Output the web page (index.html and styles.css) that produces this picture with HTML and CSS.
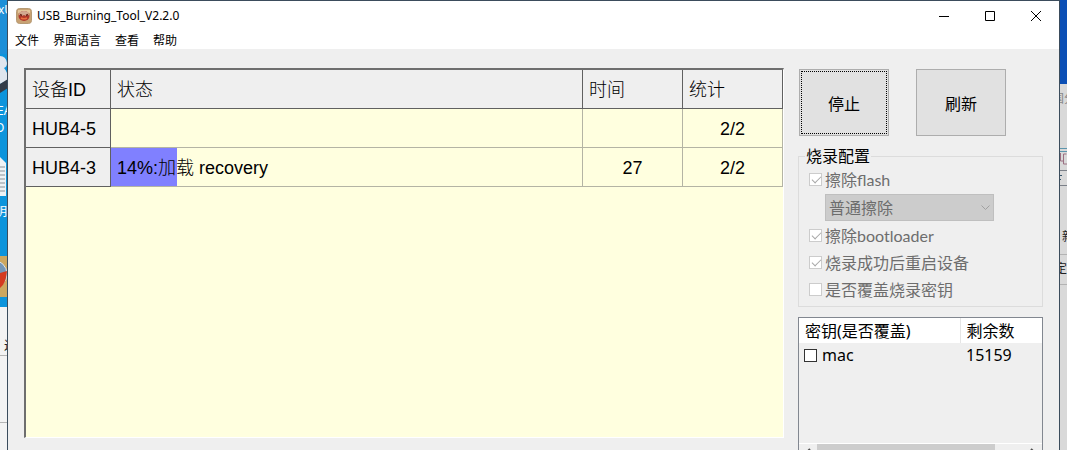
FILE: index.html
```html
<!DOCTYPE html>
<html lang="zh-CN">
<head>
    <meta charset="UTF-8">
    <meta name="viewport" content="width=device-width, initial-scale=1.0">
    <title>USB_Burning_Tool_V2.2.0</title>
    <link rel="stylesheet" href="styles.css">
</head>
<body>
    <div class="desktop">
        <!-- desktop icons behind the window, left side -->
        <svg class="desktop-left" width="8" height="450" viewBox="0 0 8 450">
            <rect width="8" height="307" fill="#0c94dc"/>
            <rect width="8" height="54" fill="#1c8fd8"/>
            <text x="-2" y="14" class="icon-label">xU</text>
            <path d="M0 56 Q6 56 7 63 Q7 67 4 68 Q8 72 8 80 L0 84Z" fill="#dfe6ee"/>
            <path d="M0 84 L8 79 L8 88 L0 93Z" fill="#333c48"/>
            <text x="-3" y="115" class="icon-label">EA</text>
            <text x="-5" y="132" class="icon-label">O</text>
            <path d="M0 157 L6 163 V196 H0Z" fill="#eef2f5"/>
            <path d="M0 167H5M0 171H5M0 175H5M0 179H5M0 183H5M0 187H5M0 191H5" stroke="#8a9299"/>
            <text x="-5" y="216" class="icon-label">明</text>
            <rect y="256" width="8" height="41" fill="#cda75f"/>
            <circle cx="-7" cy="274" r="14" fill="#7496b7" stroke="#dfe3e7"/>
            <path d="M0 273 L7 271 Q6 284 0 288Z" fill="#d43a20"/>
            <rect y="307" width="8" height="143" fill="#f3f3f3"/>
            <text x="4" y="350" class="page-label">近</text>
            <path d="M0 355.500H8M0 422.500H8" stroke="#b5b5b5"/>
        </svg>

        <div class="window">
            <header class="titlebar">
                <svg class="app-icon" width="16" height="16" viewBox="0 0 16 16">
                    <rect x=".5" y=".5" width="15" height="15" rx="3" fill="#c8a273" stroke="#b59a74"/>
                    <path d="M2 2h12v3H2z" fill="#e2c59a"/>
                    <ellipse cx="8" cy="8" rx="5.500" ry="5" fill="#b0372a"/>
                    <path d="M3 7Q3 3 8 3T13 7L10 8 8 7 6 8Z" fill="#d2a890"/>
                    <path d="M4 6.500l2 1M12 6.500l-2 1" stroke="#6d2418" stroke-width="1.500"/>
                    <path d="M5 10q3 1.500 6 0" fill="none" stroke="#e8703f" stroke-width="1.500"/>
                </svg>
                <h1>USB_Burning_Tool_V2.2.0</h1>
                <div class="window-buttons">
                    <button type="button" aria-label="最小化">
                        <svg width="10" height="10" viewBox="0 0 10 10"><path d="M0 5.500H10"/></svg>
                    </button>
                    <button type="button" aria-label="最大化">
                        <svg width="10" height="10" viewBox="0 0 10 10"><path d="M.5 .5H9.500V9.500H.5Z"/></svg>
                    </button>
                    <button type="button" aria-label="关闭">
                        <svg width="10" height="10" viewBox="0 0 10 10"><path d="M0 0L10 10M10 0L0 10"/></svg>
                    </button>
                </div>
            </header>

            <nav class="menubar">
                <a href="#">文件</a>
                <a href="#">界面语言</a>
                <a href="#">查看</a>
                <a href="#">帮助</a>
            </nav>

            <main class="content">
                <div class="devices">
                    <table class="device-table">
                        <colgroup>
                            <col class="col-id">
                            <col>
                            <col class="col-small">
                            <col class="col-small">
                        </colgroup>
                        <thead>
                            <tr>
                                <th>设备ID</th>
                                <th>状态</th>
                                <th>时间</th>
                                <th>统计</th>
                            </tr>
                        </thead>
                        <tbody>
                            <tr>
                                <th>HUB4-5</th>
                                <td></td>
                                <td></td>
                                <td class="number">2/2</td>
                            </tr>
                            <tr>
                                <th>HUB4-3</th>
                                <td class="status">
                                    <div class="progress">
                                        <div class="progress-bar" style="width: 14%"></div>
                                        <span class="progress-text">14%:加载 recovery</span>
                                    </div>
                                </td>
                                <td class="number">27</td>
                                <td class="number">2/2</td>
                            </tr>
                        </tbody>
                    </table>
                </div>

                <aside class="side">
                    <div class="actions">
                        <button type="button" class="focused">停止</button>
                        <button type="button">刷新</button>
                    </div>

                    <fieldset class="config">
                        <legend>烧录配置</legend>
                        <label class="option"><input type="checkbox" checked disabled>擦除flash</label>
                        <div class="select-box">
                            <select aria-label="擦除flash" disabled>
                                <option>普通擦除</option>
                            </select>
                            <svg width="9" height="6" viewBox="0 0 9 6"><path d="M.5 .5L4.500 4.500L8.500 .5"/></svg>
                        </div>
                        <label class="option"><input type="checkbox" checked disabled>擦除bootloader</label>
                        <label class="option"><input type="checkbox" checked disabled>烧录成功后重启设备</label>
                        <label class="option"><input type="checkbox" disabled>是否覆盖烧录密钥</label>
                    </fieldset>

                    <div class="keys">
                        <table class="key-table">
                            <thead>
                                <tr>
                                    <th class="key-name">密钥(是否覆盖)</th>
                                    <th>剩余数</th>
                                </tr>
                            </thead>
                            <tbody>
                                <tr>
                                    <td><label class="key-label"><input type="checkbox">mac</label></td>
                                    <td>15159</td>
                                </tr>
                            </tbody>
                        </table>
                        <div class="scrollbar">
                            <svg width="6" height="10" viewBox="0 0 6 10"><path d="M5 1L1 5L5 9"/></svg>
                            <div class="scroll-thumb"></div>
                            <svg width="6" height="10" viewBox="0 0 6 10"><path d="M1 1L5 5L1 9"/></svg>
                        </div>
                    </div>
                </aside>
            </main>
        </div>

        <!-- other windows behind, right side -->
        <svg class="desktop-right" width="7" height="450" viewBox="1 0 7 450">
            <rect width="8" height="84" fill="#0b4fb5"/>
            <rect y="84" width="8" height="366" fill="#d9d9d9"/>
            <text x="-7" y="103" class="page-label faded">国</text>
            <text x="5" y="103" class="page-label faded">分</text>
            <path d="M0 148.500H8M0 151.500H8" stroke="#5d96ad"/>
            <path d="M1.500 153V161H4M7.500 154H4.500V164H8" fill="none" stroke="#9b7082"/>
            <path d="M0 170.500H8M0 185.500H8" stroke="#7b8088"/>
            <path d="M0 175.500H3M0 179.500H2" stroke="#35556b"/>
            <text x="3" y="241" class="page-label">新</text>
            <path d="M0 254.500H8M0 284.500H8" stroke="#b3b3b3"/>
            <text x="-4" y="273" class="page-label">定</text>
        </svg>
    </div>
</body>
</html>
```
FILE: styles.css
```css
* {
    box-sizing: border-box;
}

body {
    margin: 0;
    font-family: "Noto Sans", "Noto Sans CJK SC", sans-serif;
    font-size: 16px;
    color: #000;
}

button, select, input {
    font: inherit;
    margin: 0;
}

.desktop {
    display: grid;
    grid-template-columns: 8px minmax(0, 1fr) 7px;
    grid-template-rows: minmax(0, 1fr);
    height: 100vh;
    overflow: hidden;
    background-color: #d9d9d9;
}

.icon-label {
    font-size: 12px;
    fill: #fff;
}

.page-label {
    font-size: 12px;
    fill: #222;
}

.faded {
    fill: #888;
}

.window {
    display: flex;
    flex-direction: column;
    min-height: 0;
    background-color: #efefef;
    border: 1px solid #3b4c5c;
    border-width: 1px 1px 0 0;
    box-shadow: -1px 0 0 #3b4c5c;
}

/* title bar and menu */
.titlebar {
    display: flex;
    align-items: center;
    flex: none;
    height: 29px;
    padding-left: 8px;
    background-color: #fff;
}

.titlebar h1 {
    margin: 0 0 0 5px;
    font-size: 12px;
    font-weight: normal;
}

.window-buttons {
    display: flex;
    align-self: stretch;
    margin-left: auto;
}

.window-buttons button {
    width: 46px;
    padding: 0;
    border: none;
    background: none;
}

.window-buttons svg {
    display: block;
    margin: auto;
    fill: none;
    stroke: #000;
}

.menubar {
    display: flex;
    flex: none;
    gap: 14px;
    height: 19px;
    padding-left: 7px;
    background-color: #fff;
    font-size: 12px;
    line-height: 22px;
}

.menubar a {
    color: #000;
    text-decoration: none;
}

.content {
    display: grid;
    grid-template-columns: minmax(0, 1fr) 245px;
    grid-template-rows: minmax(0, 1fr);
    gap: 14px;
    flex: 1;
    min-height: 0;
    padding: 19px 16px 12px;
}

/* device list */
.devices {
    background-color: #ffffdf;
    border: 1px solid #fff;
    border-top: 2px solid #6e6e6e;
    border-left: 2px solid #6e6e6e;
}

.device-table {
    width: 100%;
    table-layout: fixed;
    border-collapse: separate;
    border-spacing: 0;
    font-family: "Liberation Sans", "Noto Sans CJK SC", sans-serif;
    font-size: 18px;
    line-height: 24px;
}

.col-id {
    width: 85px;
}

.col-small {
    width: 100px;
}

.device-table th,
.device-table td {
    height: 39px;
    padding: 2px 6px 0;
    border: 1px solid #b4b4a4;
    border-width: 0 1px 1px 0;
    font-weight: 300;
    text-align: left;
    white-space: nowrap;
}

.device-table th {
    background-color: #efefef;
    border-color: #606060;
}

.device-table td.number {
    text-align: center;
}

.device-table td.status {
    padding: 0;
}

.progress {
    position: relative;
    height: 38px;
}

.progress-bar {
    height: 100%;
    background-color: #8080ff;
}

.progress-text {
    position: absolute;
    inset: 0;
    padding-left: 6px;
    line-height: 40px;
}

/* right column */
.side {
    padding-top: 1px;
}

.actions {
    display: flex;
    gap: 27px;
    padding-left: 1px;
}

.actions button {
    width: 90px;
    height: 67px;
    padding: 2px;
    background-color: #e1e1e1;
    border: 1px solid #adadad;
}

.actions .focused {
    outline: 1px dotted #000;
    outline-offset: -3px;
}

.config {
    min-width: 0;
    margin: 10px 0;
    padding: 0 0 3px 10px;
    border: 1px solid #dcdcdc;
    color: #6d6d6d;
    font-family: Lato, "Noto Sans CJK SC", sans-serif;
    line-height: 20px;
}

.config legend {
    margin-left: -4px;
    padding: 0 1px;
    color: #000;
}

.option {
    display: flex;
    align-items: center;
    gap: 3px;
    height: 27px;
}

input[type="checkbox"] {
    appearance: none;
    flex: none;
    width: 13px;
    height: 13px;
    background-color: #fff;
    border: 1px solid #333;
}

input[type="checkbox"]:disabled {
    border-color: #ccc;
}

input[type="checkbox"]:checked::before {
    content: "";
    display: block;
    width: 8px;
    height: 4px;
    margin: 2px;
    border: 1px solid #a8a8a8;
    border-width: 0 0 1px 1px;
    transform: rotate(-45deg);
}

.select-box {
    position: relative;
    width: 169px;
    height: 27px;
    margin: 1px 0 1px 16px;
}

.select-box select {
    appearance: none;
    width: 100%;
    height: 100%;
    padding: 0 3px;
    background-color: #ccc;
    border: 1px solid #bfbfbf;
    border-radius: 0;
    color: #6d6d6d;
    opacity: 1;
}

.select-box svg {
    position: absolute;
    top: 11px;
    right: 4px;
    fill: none;
    stroke: #a0a0a0;
}

.keys {
    display: flex;
    flex-direction: column;
    height: 145px;
    border: 1px solid #828790;
}

.key-table {
    width: 100%;
    border-collapse: collapse;
    line-height: 24px;
}

.key-table th {
    height: 25px;
    padding: 0 5px 0 6px;
    background-color: #fff;
    font-weight: normal;
    text-align: left;
}

.key-table .key-name {
    width: 161px;
    border-right: 1px solid #e5e5e5;
}

.key-table td {
    height: 24px;
    padding: 0 6px;
}

.key-label {
    display: flex;
    align-items: center;
    gap: 5px;
    margin-left: -1px;
}

.scrollbar {
    display: flex;
    align-items: center;
    gap: 6px;
    height: 18px;
    margin-top: auto;
    padding: 0 6px;
    border-top: 1px solid #fff;
}

.scrollbar svg {
    flex: none;
    fill: none;
    stroke: #505050;
    stroke-width: 2px;
}

.scroll-thumb {
    width: 178px;
    height: 17px;
    margin-right: auto;
    background-color: #cdcdcd;
}
```
